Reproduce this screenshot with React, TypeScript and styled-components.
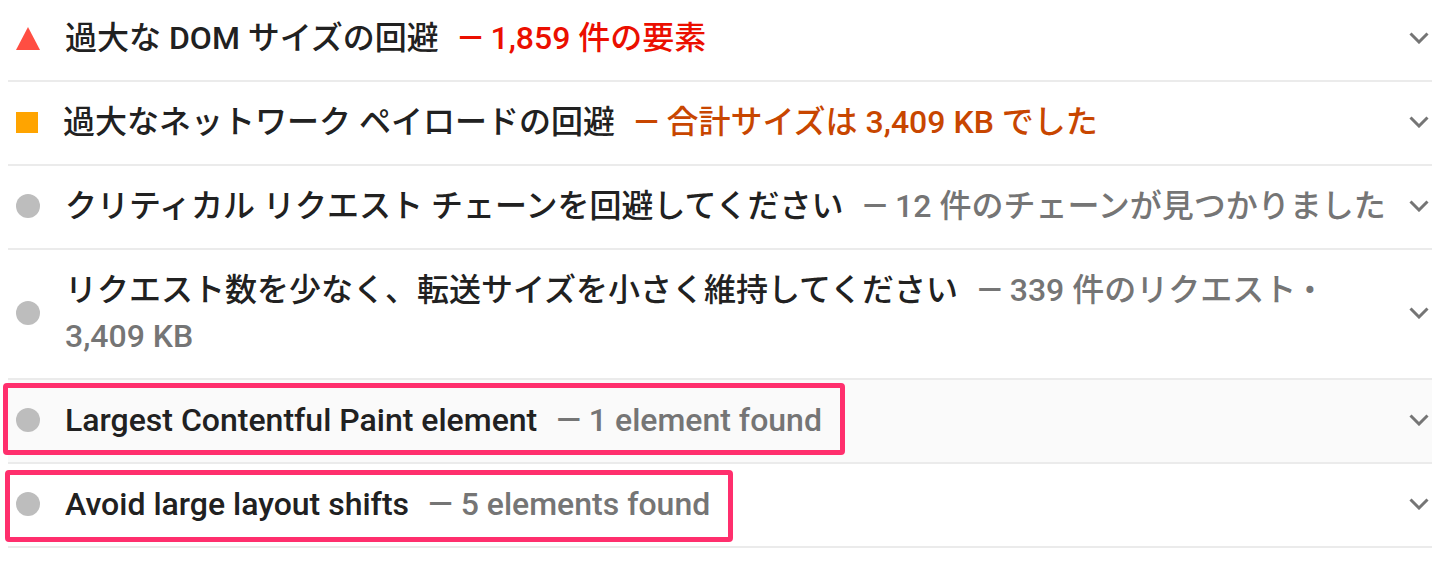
import React from "react";
import styled, { createGlobalStyle } from "styled-components";

const Global = createGlobalStyle`
  html, body { margin: 0; padding: 0; background: #ffffff; }
  body {
    font-family: Roboto, "Noto Sans CJK JP", "Noto Sans", sans-serif;
    -webkit-font-smoothing: antialiased;
  }
`;

const List = styled.div`
  margin: -2px 18px 0 8px;
  display: flex;
  flex-direction: column;
`;

const Row = styled.div<{ $hover?: boolean }>`
  position: relative;
  display: flex;
  align-items: center;
  padding: 17px 3px 19px 0;
  border-bottom: 2px solid #ebebeb;
  background: ${(p) => (p.$hover ? "#fafafa" : "transparent")};
`;

const IconCell = styled.div<{ $w: number }>`
  flex: none;
  width: ${(p) => p.$w}px;
  margin-left: 8px;
  margin-right: 25px;
  display: flex;
  align-items: center;
  justify-content: center;
`;

const Circle = styled.span`
  width: 24px;
  height: 24px;
  border-radius: 50%;
  background: #bdbdbd;
`;

const Square = styled.span`
  width: 22px;
  height: 21px;
  background: #ffa400;
`;

const Title = styled.div`
  flex: 1;
  min-width: 0;
  font-size: 32px;
  line-height: 46px;
  color: #212121;
  font-weight: 500;
`;

const Display = styled.span<{ $tone: "fail" | "average" | "info" }>`
  margin-left: 19px;
  color: ${(p) =>
    p.$tone === "fail" ? "#eb0f00" : p.$tone === "average" ? "#c84600" : "#757575"};
`;

const Chevron = styled.div`
  flex: none;
  width: 20px;
  margin-left: 20px;
  display: flex;
  align-items: center;
`;

const Highlight = styled.div<{ $left: number; $top: number; $w: number }>`
  position: absolute;
  left: ${(p) => p.$left}px;
  top: ${(p) => p.$top}px;
  width: ${(p) => p.$w}px;
  height: 72px;
  box-sizing: border-box;
  border: 5px solid #ff2f6d;
  border-radius: 4px;
  pointer-events: none;
`;

type Kind = "fail" | "average" | "info";

const Icon = ({ kind }: { kind: Kind }) => {
  if (kind === "fail")
    return (
      <IconCell $w={24}>
        <svg width="24" height="24" viewBox="0 0 24 24">
          <polygon points="12,1 24,24 0,24" fill="#ff4e42" />
        </svg>
      </IconCell>
    );
  if (kind === "average")
    return (
      <IconCell $w={22}>
        <Square />
      </IconCell>
    );
  return (
    <IconCell $w={24}>
      <Circle />
    </IconCell>
  );
};

const ChevronIcon = () => (
  <Chevron>
    <svg width="20" height="12" viewBox="0 0 20 12">
      <polyline
        points="1.5,1.5 10,10 18.5,1.5"
        fill="none"
        stroke="#757575"
        strokeWidth="3"
      />
    </svg>
  </Chevron>
);

type Audit = {
  kind: Kind;
  title: string;
  value: string;
  hover?: boolean;
  box?: { left: number; top: number; w: number };
};

const audits: Audit[] = [
  { kind: "fail", title: "過大な DOM サイズの回避", value: "— 1,859 件の要素" },
  {
    kind: "average",
    title: "過大なネットワーク ペイロードの回避",
    value: "— 合計サイズは 3,409 KB でした",
  },
  {
    kind: "info",
    title: "クリティカル リクエスト チェーンを回避してください",
    value: "— 12 件のチェーンが見つかりました",
  },
  {
    kind: "info",
    title: "リクエスト数を少なく、転送サイズを小さく維持してください",
    value: "— 339 件のリクエスト • 3,409 KB",
  },
  {
    kind: "info",
    title: "Largest Contentful Paint element",
    value: "— 1 element found",
    hover: true,
    box: { left: -5, top: 3, w: 842 },
  },
  {
    kind: "info",
    title: "Avoid large layout shifts",
    value: "— 5 elements found",
    box: { left: -3, top: 6, w: 728 },
  },
];

export default function App() {
  return (
    <>
      <Global />
      <List>
        {audits.map((a, i) => (
          <Row key={i} $hover={a.hover}>
            <Icon kind={a.kind} />
            <Title>
              {a.title}
              <Display $tone={a.kind}>{a.value}</Display>
            </Title>
            <ChevronIcon />
            {a.box && <Highlight $left={a.box.left} $top={a.box.top} $w={a.box.w} />}
          </Row>
        ))}
      </List>
    </>
  );
}
